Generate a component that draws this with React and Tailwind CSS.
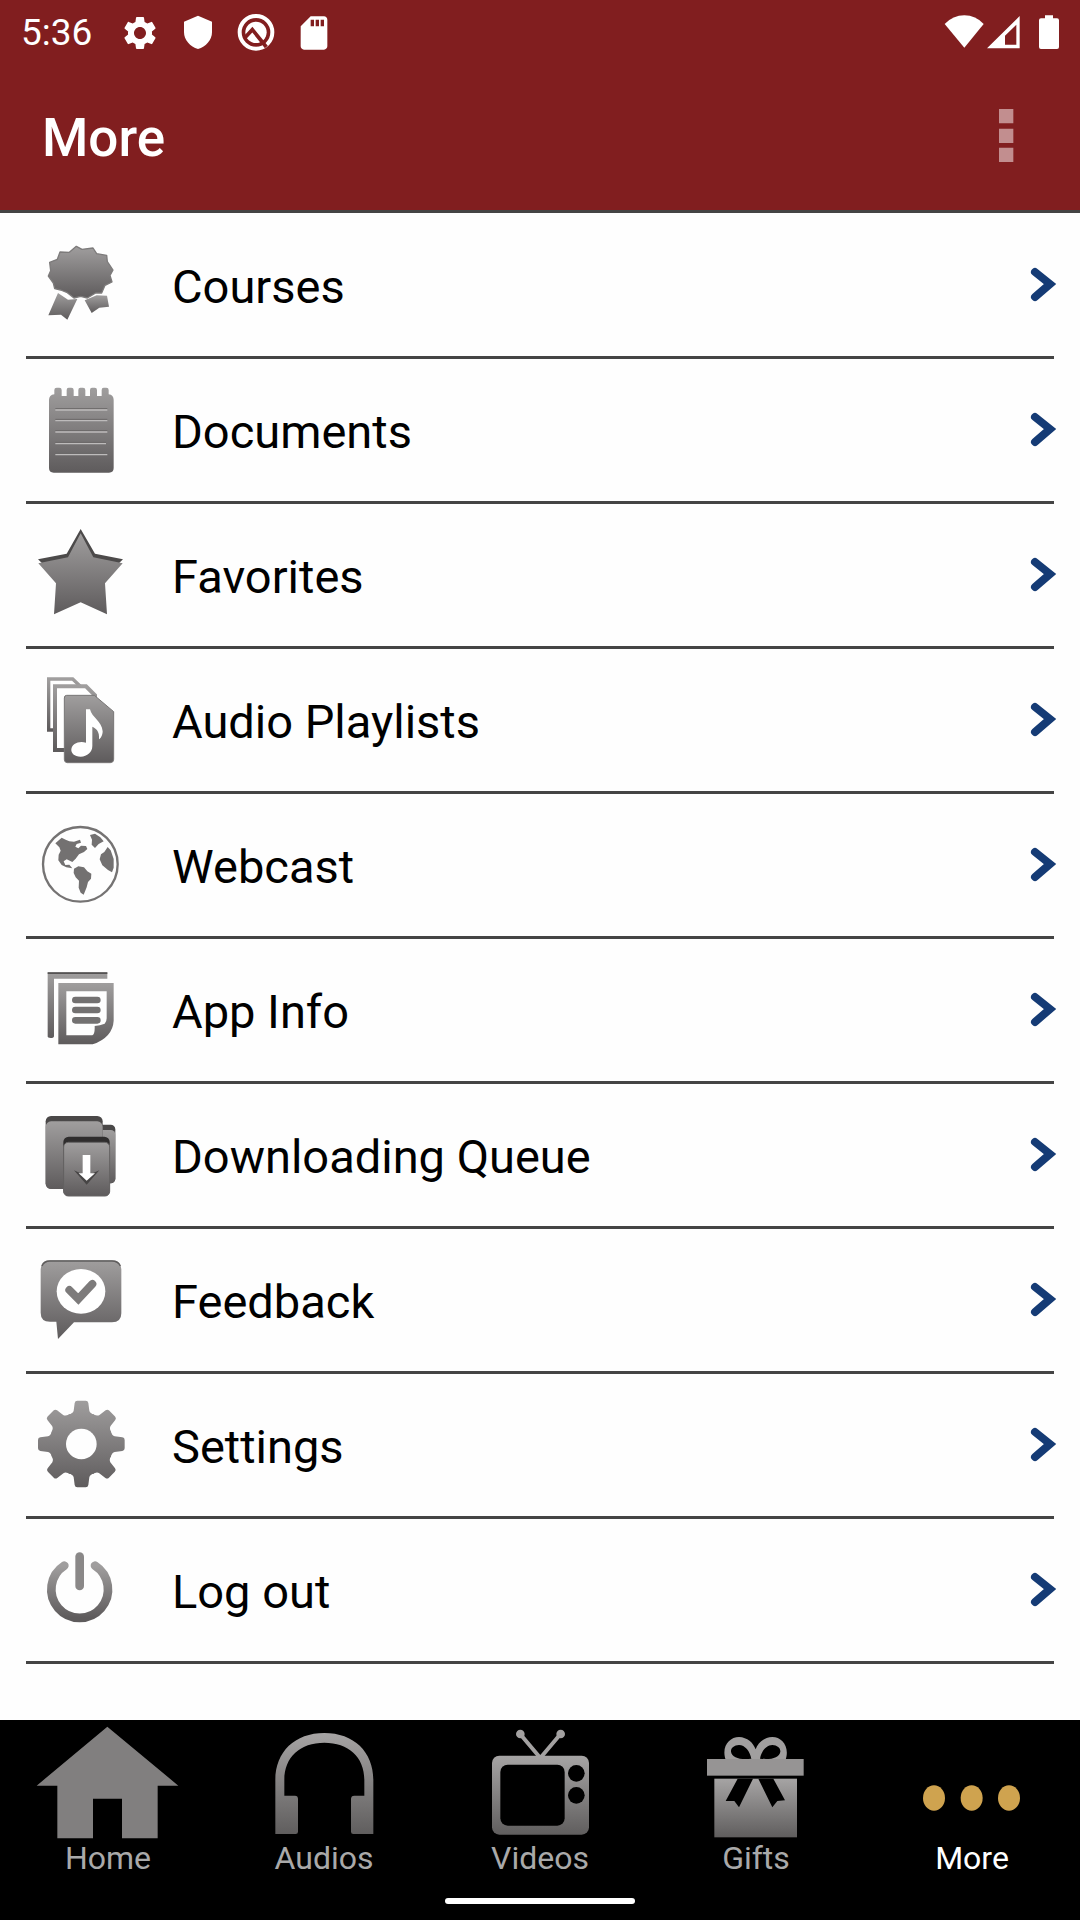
import React, { useState } from "react";
import { MdSettings, MdSdStorage } from "react-icons/md";

const Gradients = () => (
  <svg className="absolute size-0" aria-hidden="true">
    <defs>
      <linearGradient id="steel" x1="0" y1="0" x2="0" y2="1">
        <stop offset="0" stopColor="#a09e9e" />
        <stop offset="1" stopColor="#5e5b5c" />
      </linearGradient>
      <linearGradient id="silver" x1="0" y1="0" x2="0" y2="1">
        <stop offset="0" stopColor="#a6a4a4" />
        <stop offset="1" stopColor="#605e5e" />
      </linearGradient>
    </defs>
  </svg>
);

const RowIcon = ({ top = 45, children }) => (
  <svg
    viewBox={`96 ${top} 300 300`}
    className="size-[100px] shrink-0"
    fill="url(#steel)"
    aria-hidden="true"
  >
    {children}
  </svg>
);

const CoursesIcon = () => (
  <RowIcon>
    <path
      stroke="#7d7b7b"
      strokeWidth="4"
      strokeLinejoin="round"
      d="M229 79 246 88 279 84 290 101 320 106 322 125 339 150 330 166 336 186 315 196 305 219 287 219 262 234 242 229 222 234 202 218 182 210 164 206 160 189 145 168 152 152 149 127 172 118 180 96 208 97Z"
    />
    <path d="M174 219 204 239 232 237 202 299 183 284 145 286Z" />
    <path d="M254 241 290 226 321 227 327 260 298 263 275 279Z" />
  </RowIcon>
);

const DocumentsIcon = () => (
  <RowIcon top={480}>
    <path d="M163 523V510Q163 503 170 503H178Q185 503 185 510V528H200V510Q200 503 206 503H214Q221 503 221 510V528H235V510Q235 503 241 503H249Q256 503 256 510V528H270V510Q270 503 276 503H284Q291 503 291 510V528H305V510Q305 503 311 503H319Q326 503 326 510V523Q341 525 341 540V744Q341 758 327 758H161Q147 758 147 744V540Q147 525 163 523Z" />
    <path
      stroke="#6b6969"
      strokeWidth="3"
      d="M166 566H322M166 598H322M166 632H322M166 667H318M166 700H322"
    />
    <path
      stroke="#bdbbbb"
      strokeWidth="4"
      d="M166 570H322M166 602H322M166 636H322M166 671H318M166 704H322"
    />
  </RowIcon>
);

const FavoritesIcon = () => (
  <RowIcon>
    <path
      fill="#4c4a4a"
      d="M242 57 285 131 369 148 315 200 168 200 114 148 200 131Z"
    />
    <path d="M242 70 280 142 368 160 315 220 321 313 242 277 162 313 168 220 115 160 204 142Z" />
  </RowIcon>
);

const PlaylistsIcon = () => (
  <RowIcon top={480}>
    <path
      fill="#fff"
      stroke="url(#steel)"
      strokeWidth="10"
      d="M146 507H218L240 528V660H146Z"
    />
    <path
      fill="#fff"
      stroke="url(#steel)"
      strokeWidth="12"
      d="M165 529H258L285 556V720H165Z"
    />
    <path
      stroke="#787676"
      strokeWidth="3"
      d="M200 556H283L341 605V748Q341 758 331 758H202Q193 758 193 748V564Q193 556 200 556Z"
    />
    <path
      fill="#fff"
      d="M258 598H270C275 622 306 634 308 664C308 674 303 685 297 688C299 664 289 656 277 650V708C277 726 262 740 242 740C223 740 213 730 214 718C216 702 235 692 258 698Z"
    />
  </RowIcon>
);

const WebcastIcon = () => (
  <RowIcon>
    <circle cx="241" cy="193" r="112" fill="none" stroke="#757373" strokeWidth="7" />
    <g fill="#737171">
      <path d="M166 130 185 113 197 119 208 124 222 125 240 119 243 128 230 132 226 140 235 145 243 137 258 138 262 147 252 156 237 163 227 176 217 186 200 178 191 184 196 195 208 194 217 205 199 202 185 195 175 181 176 164 182 152 178 142Z" />
      <path d="M270 105 285 101 301 112 311 124 296 132 285 144 275 134 276 119Z" />
      <path d="M323 141 332 151 341 177 341 203 336 217 324 210 307 196 299 178 303 163 313 156Z" />
      <path d="M222 206 235 199 252 202 262 214 274 221 273 236 264 246 260 262 251 284 242 278 236 263 237 242 227 232 221 219Z" />
    </g>
  </RowIcon>
);

const AppInfoIcon = () => (
  <RowIcon top={480}>
    <path d="M143 517H322V536H162V708Q162 714 152 714T143 708Z" />
    <path fill="#555353" d="M143 517H322V522H143Z" />
    <path
      fillRule="evenodd"
      d="M175 549H341V662Q338 712 278 733H175ZM199 574V706H277Q285 702 284 678Q300 676 314 671Q320 665 320 655V574Z"
    />
    <path
      fill="none"
      stroke="#737171"
      strokeWidth="20"
      strokeLinecap="round"
      d="M226 600H292M226 630H292M226 661H292"
    />
  </RowIcon>
);

const DownloadIcon = () => (
  <RowIcon>
    <rect x="270" y="104" width="76" height="176" rx="14" fill="#4a4848" />
    <rect x="270" y="120" width="76" height="160" rx="14" />
    <rect x="137" y="78" width="171" height="218" rx="16" fill="#4a4848" />
    <rect x="137" y="94" width="171" height="203" rx="16" />
    <rect x="190" y="140" width="139" height="178" rx="16" fill="#2f2d2d" />
    <rect
      x="191"
      y="157"
      width="138"
      height="161"
      rx="14"
      stroke="#666464"
      strokeWidth="3"
    />
    <path fill="#474545" d="M222 241 248 253 271 253 298 241 260 284Z" />
    <path fill="#fff" d="M248 195H271V250H285L260 272 236 250H248Z" />
  </RowIcon>
);

const FeedbackIcon = () => (
  <RowIcon top={480}>
    <path d="M150 511H336Q364 511 364 538V670Q364 697 336 697H222L174 747 169 695H150Q122 695 122 668V538Q122 511 150 511Z" />
    <path
      fill="none"
      stroke="#5f5d5d"
      strokeWidth="4"
      d="M126 528Q132 513 150 513H336Q354 513 361 528"
    />
    <ellipse cx="243" cy="604" rx="73" ry="67" fill="#fff" />
    <path
      fill="none"
      stroke="#7d7b7b"
      strokeWidth="24"
      strokeLinecap="round"
      d="M208 600 235 627 277 582"
    />
  </RowIcon>
);

const SettingsIcon = () => (
  <RowIcon>
    <mask id="cog">
      <g fill="#fff">
        <circle cx="244" cy="192" r="96" />
        {[0, 45, 90, 135].map((deg) => (
          <path
            key={deg}
            transform={`rotate(${deg} 244 192)`}
            d="M232 62H257Q264 62 265 69L268 92Q270 100 282 104V280Q270 284 268 292L265 315Q264 322 257 322H232Q225 322 224 315L221 292Q219 284 206 280V104Q219 100 221 92L224 69Q225 62 232 62Z"
          />
        ))}
      </g>
      <circle cx="244" cy="192" r="46" fill="#000" />
    </mask>
    <rect x="112" y="60" width="264" height="264" mask="url(#cog)" />
  </RowIcon>
);

const LogoutIcon = () => (
  <RowIcon top={480}>
    <path
      fill="none"
      stroke="url(#steel)"
      strokeWidth="26"
      strokeLinecap="round"
      d="M285 557A85 85 0 1 1 193 557"
    />
    <rect x="226" y="517" width="26" height="114" rx="13" fill="#8a8888" />
  </RowIcon>
);

const menuItems = [
  { name: "Courses", icon: CoursesIcon },
  { name: "Documents", icon: DocumentsIcon },
  { name: "Favorites", icon: FavoritesIcon },
  { name: "Audio Playlists", icon: PlaylistsIcon },
  { name: "Webcast", icon: WebcastIcon },
  { name: "App Info", icon: AppInfoIcon },
  { name: "Downloading Queue", icon: DownloadIcon },
  { name: "Feedback", icon: FeedbackIcon },
  { name: "Settings", icon: SettingsIcon },
  { name: "Log out", icon: LogoutIcon },
];

const tabs = [
  {
    name: "Home",
    viewBox: "108 60 432 360",
    art: (
      <path
        fill="#817f7f"
        d="M322 80 535 257H473V415H366V296H279V415H172V257H110Z"
      />
    ),
  },
  {
    name: "Audios",
    viewBox: "756 60 432 360",
    art: (
      <path d="M826 402V240C826 155 885 99 973 99S1120 155 1120 240V402H1060Q1053 402 1053 395V297Q1053 287 1063 287H1093V240C1093 170 1045 128 973 128S853 170 853 240V287H885Q894 287 894 297V395Q894 402 887 402Z" />
    ),
  },
  {
    name: "Videos",
    viewBox: "204 60 432 360",
    art: (
      <>
        <g fill="#a3a1a1" stroke="#a3a1a1">
          <path fill="none" strokeWidth="12" d="M361 103 421 174 481 103" />
          <circle cx="361" cy="102" r="9" strokeWidth="8" />
          <circle cx="482" cy="102" r="9" strokeWidth="8" />
        </g>
        <rect x="276" y="167" width="291" height="237" rx="22" />
        <g fill="#000">
          <rect x="301" y="194" width="193" height="183" rx="22" />
          <circle cx="529" cy="220" r="25" />
          <circle cx="529" cy="286" r="25" />
        </g>
      </>
    ),
  },
  {
    name: "Gifts",
    viewBox: "852 60 432 360",
    art: (
      <>
        <path
          fill="#a19f9f"
          fillRule="evenodd"
          d="M978 182C962 140 988 111 1017 111C1042 112 1060 128 1067 148C1074 128 1092 112 1117 111C1146 111 1171 140 1156 182ZM993 155C996 173 1020 180 1054 176C1050 154 1035 135 1017 135C1002 136 992 144 993 155ZM1141 155C1138 173 1114 180 1080 176C1084 154 1099 135 1117 135C1132 136 1142 144 1141 155Z"
        />
        <rect x="921" y="177" width="290" height="50" fill="#969494" />
        <rect x="943" y="236" width="248" height="176" />
        <path
          fill="#000"
          d="M1013 236H1059L1017 322 1003 303 977 303ZM1075 236H1120L1155 301 1132 303 1117 322Z"
        />
      </>
    ),
  },
  {
    name: "More",
    viewBox: "180 60 432 360",
    art: (
      <g fill="#cfa34f">
        <ellipse cx="282" cy="294" rx="33" ry="38" />
        <ellipse cx="395" cy="294" rx="33" ry="38" />
        <ellipse cx="507" cy="294" rx="33" ry="38" />
      </g>
    ),
  },
];

const StatusBar = () => (
  <div className="flex h-[66px] items-center justify-between pr-[11px] pl-[21px]">
    <div className="flex items-center gap-[18px]">
      <span className="w-[81px] text-[37px]">5:36</span>
      <MdSettings className="size-10" />
      <svg viewBox="534 39 120 120" className="size-10" fill="currentColor">
        <path d="M594 47 636 65V96C636 120 618 140 594 147C570 140 552 120 552 96V65Z" />
      </svg>
      <svg viewBox="708 39 120 120" className="size-10" fill="none">
        <circle cx="768" cy="97" r="49" stroke="currentColor" strokeWidth="12" />
        <circle cx="768" cy="97" r="32" fill="currentColor" />
        <path stroke="#811e1f" strokeWidth="11" d="M736 112 757 89 799 141" />
      </svg>
      <MdSdStorage className="size-10" />
    </div>
    <div className="flex items-center">
      <svg viewBox="133 39 120 120" className="size-10" fill="currentColor">
        <path d="M194 143 135 72Q160 46 194 46T252 72Z" />
      </svg>
      <svg viewBox="253 39 120 120" className="size-10" fill="currentColor">
        <path fillRule="evenodd" d="M360 48V145H262ZM350 74 316 107V134H350Z" />
      </svg>
      <svg viewBox="387 39 120 120" className="ml-[5px] size-10" fill="currentColor">
        <path d="M435 46H459V55H471Q477 55 477 61V141Q477 147 471 147H423Q417 147 417 141V61Q417 55 423 55H435Z" />
      </svg>
    </div>
  </div>
);

const Header = () => (
  <header className="border-b-[3px] border-[#444] bg-[#811e1f] text-white">
    <StatusBar />
    <div className="flex h-36 items-center justify-between pr-11 pl-[42px]">
      <h1 className="pt-[2px] text-[53px] font-medium">More</h1>
      <button type="button" aria-label="More options" className="size-[60px]">
        <svg viewBox="228 325 180 180" fill="#c28e8f">
          <path d="M297 328h43v43h-43zM297 387h43v43h-43zM297 444h43v43h-43z" />
        </svg>
      </button>
    </div>
  </header>
);

export default function App() {
  const [activeTab, setActiveTab] = useState("More");

  return (
    <div className="flex min-h-screen flex-col bg-[#fefefe] font-['Roboto',sans-serif]">
      <Gradients />
      <Header />

      <main className="flex-1 pt-px">
        <ul>
          {menuItems.map(({ name, icon: Icon }) => (
            <li key={name}>
              <button
                type="button"
                className="flex h-[142px] w-full items-center pr-[22px] pl-8 text-left"
              >
                <Icon />
                <span className="ml-10 flex-1 pt-1 text-[47px] text-black">{name}</span>
                <svg
                  viewBox="0 0 28 36"
                  className="h-9 w-7"
                  fill="none"
                  stroke="#153b75"
                  strokeWidth="8"
                  strokeLinecap="round"
                  aria-hidden="true"
                >
                  <path d="M5 5 20 17 5 30" />
                </svg>
              </button>
              <div className="mx-[26px] h-[3px] bg-[#444]" />
            </li>
          ))}
        </ul>
      </main>

      {/* Bottom tabs */}
      <nav className="bg-black pb-4">
        <div className="grid grid-cols-5">
          {tabs.map(({ name, viewBox, art }) => (
            <button
              key={name}
              type="button"
              onClick={() => setActiveTab(name)}
              className={`flex flex-col items-center ${
                activeTab === name ? "text-white" : "text-[#a9a9a9]"
              }`}
            >
              <svg
                viewBox={viewBox}
                className="h-[120px] w-36"
                fill="url(#silver)"
                aria-hidden="true"
              >
                {art}
              </svg>
              <span className="text-[32px] leading-9">{name}</span>
            </button>
          ))}
        </div>
        <div className="mx-auto mt-[22px] h-[6px] w-[190px] rounded-full bg-white" />
      </nav>
    </div>
  );
}
